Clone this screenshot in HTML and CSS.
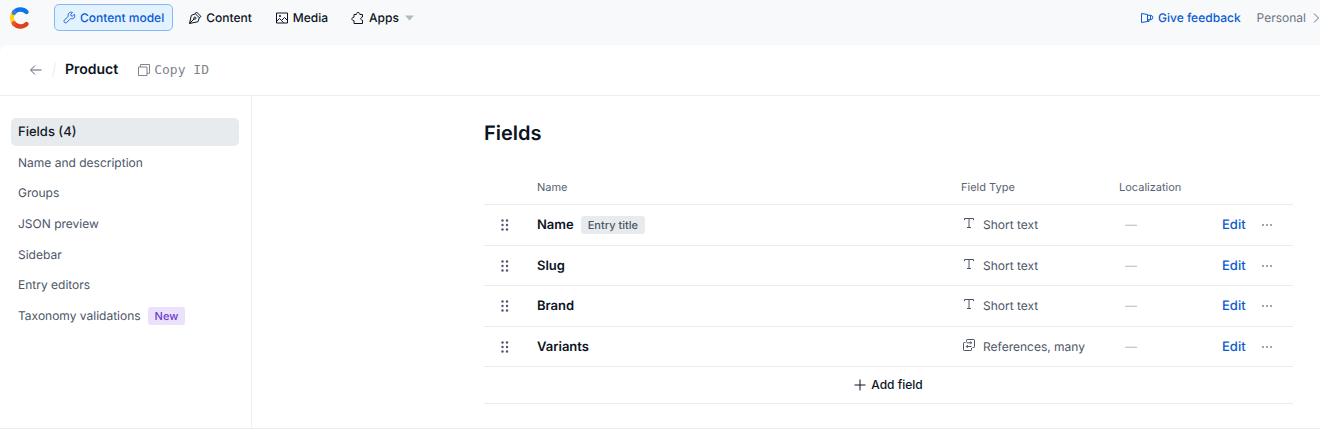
FILE: index.html
```
<!DOCTYPE html>
<html lang="en">
<head>
<meta charset="utf-8">
<title>Product – Content model</title>
<link rel="stylesheet" href="styles.css">
</head>
<body>
<svg class="sprite" aria-hidden="true">
  <symbol id="grip" viewBox="0 0 8 12"><g fill="currentColor"><circle cx="1.5" cy="1.5" r="1.2"/><circle cx="6" cy="1.5" r="1.2"/><circle cx="1.5" cy="6" r="1.2"/><circle cx="6" cy="6" r="1.2"/><circle cx="1.5" cy="10.5" r="1.2"/><circle cx="6" cy="10.5" r="1.2"/></g></symbol>
  <symbol id="text-type" viewBox="0 0 12 12"><path d="M1.500 3.200V1.500h9v1.700M6 1.500v9M4 10.500h4" fill="none" stroke="currentColor"/></symbol>
  <symbol id="refs" viewBox="0 0 12 12"><path d="M3.500 2.800V1.200Q3.500.5 4.200.5h6.600Q11.500.5 11.500 1.200v6.600q0 .7-.7.7H9.500M2.500 3.500H1.200q-.7 0-.7.7v6.600q0 .7.7.7h6.600q.7 0 .7-.7V9M3.500 3.800h5M7.200 2.300l1.500 1.500-1.500 1.500M8.500 7.500h-5M4.800 6L3.300 7.500l1.500 1.500" fill="none" stroke="currentColor"/></symbol>
  <symbol id="dots" viewBox="0 0 12 4"><g fill="currentColor"><circle cx="2" cy="2" r=".9"/><circle cx="6" cy="2" r=".9"/><circle cx="10" cy="2" r=".9"/></g></symbol>
</svg>
<header class="topbar">
  <a class="logo" href="#" aria-label="Home">
    <svg width="22" height="24" viewBox="0 0 22 24" fill="none" stroke-width="4.400" stroke-linecap="round">
      <path d="M5 6.500A8.500 8.500 0 0 0 5 17.500" stroke="#ffd21f"/>
      <path d="M5 17.500A8.500 8.500 0 0 0 17.500 18" stroke="#e0401b"/>
      <path d="M5 6.500A8.500 8.500 0 0 1 17.500 6" stroke="#1273eb"/>
      <circle cx="5" cy="6.500" r="2.200" fill="#3c80cf" stroke="none"/>
      <circle cx="5" cy="17.500" r="2.200" fill="#e5552e" stroke="none"/>
    </svg>
  </a>
  <nav class="mainnav">
    <a class="tab tab-active" href="#"><svg width="13" height="13" viewBox="0 0 14 14"><path d="M12.300 3.600L10.200 5.500 8.600 5.200 8.300 3.600 10.300 1.600C8.700.9 7 1.300 6.100 2.500 5.400 3.500 5.300 4.600 5.700 5.600L1.600 9.800C.9 10.500.9 11.600 1.600 12.300S3.400 13 4.100 12.300L8.300 8.100C9.500 8.600 10.700 8.400 11.700 7.600 12.800 6.600 13 5 12.300 3.600ZM2.900 10.900h.1"/></svg>Content model</a>
    <a class="tab" href="#"><svg width="14" height="14" viewBox="0 0 14 14"><path d="M8.500 1L13 5.500 11.300 6.700 10 10.700 1.500 12.500 3.300 4.400 7.300 2.800ZM7.300 2.800L11.300 6.700M1.500 12.500L6 8"/><circle cx="6.800" cy="7.200" r="1.100"/></svg>Content</a>
    <a class="tab" href="#"><svg width="14" height="14" viewBox="0 0 14 14"><path d="M1.500 2h11v10h-11ZM1.500 10.500L4.500 7.500 6.500 9.500 9.500 6.500 12.500 9.500M6.500 9.500L8.500 11.700"/><circle cx="5" cy="5" r=".6" fill="currentColor"/></svg>Media</a>
    <a class="tab" href="#"><svg width="14" height="14" viewBox="0 0 14 14"><path d="M3 3.500H5.300C4.900.8 9.200.8 8.800 3.500H11.500V6C9.300 5.800 9.300 9.500 11.500 9.300V12.500H3V9.500C.2 9.900.2 5.900 3 6.300Z"/></svg>Apps<svg class="caret" width="9" height="6" viewBox="0 0 9 6"><path d="M0 .5h9L4.500 5.500Z"/></svg></a>
  </nav>
  <div class="account">
    <a class="feedback" href="#"><svg width="14" height="12" viewBox="0 0 14 12"><path d="M1.500 1.500L7.500 2.500V9.500L1.500 10.500ZM7.500 3.300H10.500Q12.800 3.500 12.800 5.500T10.500 7.700H7.500M9 7.700V9.500H7.500M10.500 3.300V7.700"/></svg>Give feedback</a>
    <a class="personal" href="#">Personal<svg width="8" height="12" viewBox="0 0 8 12"><path d="M2 1.500L6.500 6 2 10.500"/></svg></a>
  </div>
</header>
<section class="page">
  <div class="pagehead">
    <button class="back" type="button" aria-label="Back"><svg width="14" height="12" viewBox="0 0 14 12"><path d="M12.500 6H2M6 1.500L1.500 6 6 10.500"/></svg></button>
    <svg class="slash" width="4" height="14" viewBox="0 0 4 14"><path d="M3.500 0L.5 14"/></svg>
    <h1 class="title">Product</h1>
    <button class="copy" type="button"><svg width="12" height="12" viewBox="0 0 12 12"><path d="M.5 3h8.500v8.500H.5ZM2.500 3V.5h9v8.800H9"/></svg>Copy ID</button>
  </div>
  <div class="columns">
    <nav class="sidebar">
      <ul class="sidelist">
        <li><a class="side side-active" href="#">Fields (4)</a></li>
        <li><a class="side" href="#">Name and description</a></li>
        <li><a class="side" href="#">Groups</a></li>
        <li><a class="side" href="#">JSON preview</a></li>
        <li><a class="side" href="#">Sidebar</a></li>
        <li><a class="side" href="#">Entry editors</a></li>
        <li><a class="side" href="#">Taxonomy validations<span class="badge badge-new">New</span></a></li>
      </ul>
    </nav>
    <main class="content">
      <div class="fields">
        <h2 class="heading">Fields</h2>
        <table class="table">
          <colgroup><col class="c-grip"><col><col class="c-type"><col class="c-loc"><col class="c-act"></colgroup>
          <thead><tr><th></th><th>Name</th><th>Field Type</th><th>Localization</th><th></th></tr></thead>
          <tbody>
            <tr><td><svg class="grip"><use href="#grip"/></svg></td><td class="name">Name<span class="badge">Entry title</span></td><td><span class="type"><svg class="ticon"><use href="#text-type"/></svg>Short text</span></td><td class="loc">—</td><td><span class="actions"><a class="edit" href="#">Edit</a><button class="more" type="button" aria-label="More actions"><svg class="dots"><use href="#dots"/></svg></button></span></td></tr>
            <tr><td><svg class="grip"><use href="#grip"/></svg></td><td class="name">Slug</td><td><span class="type"><svg class="ticon"><use href="#text-type"/></svg>Short text</span></td><td class="loc">—</td><td><span class="actions"><a class="edit" href="#">Edit</a><button class="more" type="button" aria-label="More actions"><svg class="dots"><use href="#dots"/></svg></button></span></td></tr>
            <tr><td><svg class="grip"><use href="#grip"/></svg></td><td class="name">Brand</td><td><span class="type"><svg class="ticon"><use href="#text-type"/></svg>Short text</span></td><td class="loc">—</td><td><span class="actions"><a class="edit" href="#">Edit</a><button class="more" type="button" aria-label="More actions"><svg class="dots"><use href="#dots"/></svg></button></span></td></tr>
            <tr><td><svg class="grip"><use href="#grip"/></svg></td><td class="name">Variants</td><td><span class="type"><svg class="ticon"><use href="#refs"/></svg>References, many</span></td><td class="loc">—</td><td><span class="actions"><a class="edit" href="#">Edit</a><button class="more" type="button" aria-label="More actions"><svg class="dots"><use href="#dots"/></svg></button></span></td></tr>
          </tbody>
        </table>
        <button class="add" type="button"><svg width="12" height="12" viewBox="0 0 12 12"><path d="M6 .5v11M.5 6h11"/></svg>Add field</button>
      </div>
    </main>
  </div>
</section>
</body>
</html>
```
FILE: styles.css
```
* { box-sizing: border-box; }
body {
  margin: 0;
  min-height: 100vh;
  display: flex;
  flex-direction: column;
  background: #f7f9fa;
  color: #0c1424;
  font: 12px/20px Inter, "Liberation Sans", sans-serif;
  text-rendering: geometricPrecision;
}
a { color: inherit; text-decoration: none; }
button { font: inherit; color: inherit; background: none; border: 0; padding: 0; cursor: pointer; }
svg { flex: none; fill: none; stroke: currentColor; }
h1, h2, ul { margin: 0; padding: 0; }
.sprite { position: absolute; width: 0; height: 0; }
.sprite circle { stroke: none; }

.topbar { display: flex; align-items: center; padding: 4px 0 14px 9px; }
.logo { display: flex; margin-right: 23px; }
.mainnav { display: flex; gap: 7px; font-weight: 500; }
.tab { display: flex; align-items: center; gap: 4px; height: 27px; padding: 0 7px; border: 1px solid transparent; border-radius: 5px; }
.tab-active { padding: 0 8px; background: #e3f2ff; border-color: #85b9f5; color: #0b5bd0; }
.caret { margin-left: 2px; fill: #afbdc0; stroke: none; }
.account { display: flex; gap: 16px; margin-left: auto; }
.feedback { display: flex; align-items: center; gap: 4px; color: #0b5bd0; font-weight: 500; }
.personal { display: flex; align-items: center; gap: 6px; color: #6c7583; }

.page { flex: 1; display: flex; flex-direction: column; background: #fff; border-bottom: 1px solid #e9ecee; border-radius: 8px 0 0 0; }
.pagehead { display: flex; align-items: center; height: 51px; padding-left: 29px; border-bottom: 1px solid #edeff1; }
.back { display: flex; color: #596373; }
.slash { margin: 0 9px; stroke: #e7ebee; }
.title { font-size: 14px; line-height: 20px; font-weight: 600; }
.copy { display: flex; align-items: center; gap: 4px; margin-left: 20px; color: #7f848d; font: 13px/20px "DejaVu Sans Mono", monospace; }

.columns { flex: 1; display: flex; }
.sidebar { width: 252px; padding: 22px 12px 22px 11px; border-right: 1px solid #edeff1; }
.sidelist { display: grid; align-content: space-between; min-height: 212px; list-style: none; }
.side { display: flex; align-items: center; height: 28px; padding: 0 7px; border-radius: 5px; color: #4c5566; }
.side-active { background: #e7ebee; color: #111b2b; font-size: 13px; font-weight: 500; }
.badge { display: inline-block; margin-left: 7px; padding: 0 7px; border-radius: 3px; background: #e7ebee; color: #4c5566; font-size: 11px; line-height: 18px; font-weight: 500; }
.badge-new { background: #ece1fc; color: #6c3ecf; }

.content { flex: 1; padding: 24px 27px 24px 24px; }
.fields { max-width: 809px; margin-left: auto; }
.heading { font-size: 20px; line-height: 26px; font-weight: 600; }
.table { width: 100%; margin-top: 23px; table-layout: fixed; border-collapse: separate; border-spacing: 0; }
.c-grip { width: 53px; }
.c-type { width: 158px; }
.c-loc { width: 98px; }
.c-act { width: 76px; }
th, td { padding: 0; text-align: left; border-bottom: 1px solid #e9ecee; }
th { height: 36px; font-size: 11px; font-weight: 400; color: #596373; }
td { height: 40px; }
tr:nth-child(odd) td { height: 41px; }
.grip { display: block; width: 8px; height: 12px; margin-left: 17px; color: #53556d; }
.name { font-size: 13px; font-weight: 600; }
.type { display: flex; align-items: center; gap: 8px; padding-left: 2px; color: #4c5566; }
.ticon { width: 12px; height: 12px; margin-bottom: 4px; }
.loc { padding-left: 6px; color: #b7c2c5; }
.actions { display: flex; align-items: center; gap: 15px; padding-left: 5px; }
.edit { color: #0b5bd0; font-size: 13px; font-weight: 500; }
.more { display: flex; color: #747b84; }
.dots { width: 12px; height: 4px; }
.add { display: flex; align-items: center; justify-content: center; gap: 5px; width: 100%; height: 37px; border-bottom: 1px solid #e9ecee; font-weight: 500; }
```
